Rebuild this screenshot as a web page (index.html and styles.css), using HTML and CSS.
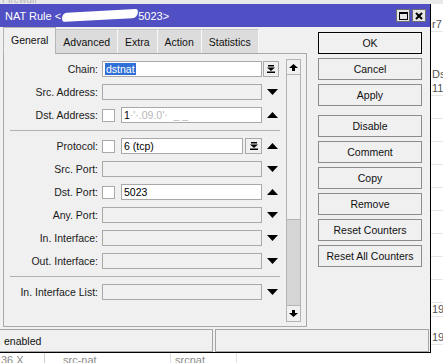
FILE: index.html
```html
<!DOCTYPE html>
<html>
<head>
<meta charset="utf-8">
<link rel="stylesheet" href="styles.css">
</head>
<body>
<div class="screen">
  <div class="topstrip"><span class="ghost">Firewall</span></div>

  <div class="dialog">
    <div class="titlebar">
      <div class="title">NAT Rule &lt;<span class="redact"></span>5023&gt;</div>
      <div class="winbtns">
        <div class="winbtn"><svg width="9" height="8" viewBox="0 0 9 8"><rect x="0.5" y="0.5" width="8" height="7" fill="none" stroke="#000"/><rect x="0" y="0" width="9" height="2" fill="#000"/></svg></div>
        <div class="winbtn"><svg width="8" height="8" viewBox="0 0 8 8"><path d="M1 1 L7 7 M7 1 L1 7" stroke="#000" stroke-width="2"/></svg></div>
      </div>
    </div>

    <div class="body">
      <div class="left">
        <div class="tabs">
          <div class="tab active">General</div>
          <div class="tab">Advanced</div>
          <div class="tab">Extra</div>
          <div class="tab">Action</div>
          <div class="tab">Statistics</div>
        </div>
        <div class="panel">
          <div class="form">
            <div class="row">
              <div class="label">Chain:</div>
              <div class="ctl"><div class="field white"><span class="sel">dstnat</span></div></div>
              <div class="arrow start"><div class="ddbtn"><svg width="8" height="8" viewBox="0 0 8 8"><rect x="1" y="0" width="6" height="1.5"/><polygon points="0,2.5 8,2.5 4,6"/><rect x="0" y="6.5" width="8" height="1.5"/></svg></div></div>
            </div>
            <div class="row">
              <div class="label">Src. Address:</div>
              <div class="ctl"><div class="field"></div></div>
              <div class="arrow"><svg width="11" height="6" viewBox="0 0 11 6"><polygon points="0,0 11,0 5.5,6"/></svg></div>
            </div>
            <div class="row">
              <div class="label">Dst. Address:</div>
              <div class="ctl"><div class="check"></div><div class="field white">1<span class="faint">·'·.09.0'·</span>&nbsp; <span class="faint">_ _</span></div></div>
              <div class="arrow"><svg width="11" height="6" viewBox="0 0 11 6"><polygon points="0,6 11,6 5.5,0"/></svg></div>
            </div>
            <div class="sep"></div>
            <div class="row">
              <div class="label">Protocol:</div>
              <div class="ctl"><div class="check"></div><div class="field white">6 (tcp)</div><div class="ddbtn inl"><svg width="8" height="8" viewBox="0 0 8 8"><rect x="1" y="0" width="6" height="1.5"/><polygon points="0,2.5 8,2.5 4,6"/><rect x="0" y="6.5" width="8" height="1.5"/></svg></div></div>
              <div class="arrow"><svg width="11" height="6" viewBox="0 0 11 6"><polygon points="0,6 11,6 5.5,0"/></svg></div>
            </div>
            <div class="row">
              <div class="label">Src. Port:</div>
              <div class="ctl"><div class="field"></div></div>
              <div class="arrow"><svg width="11" height="6" viewBox="0 0 11 6"><polygon points="0,0 11,0 5.5,6"/></svg></div>
            </div>
            <div class="row">
              <div class="label">Dst. Port:</div>
              <div class="ctl"><div class="check"></div><div class="field white">5023</div></div>
              <div class="arrow"><svg width="11" height="6" viewBox="0 0 11 6"><polygon points="0,6 11,6 5.5,0"/></svg></div>
            </div>
            <div class="row">
              <div class="label">Any. Port:</div>
              <div class="ctl"><div class="field"></div></div>
              <div class="arrow"><svg width="11" height="6" viewBox="0 0 11 6"><polygon points="0,0 11,0 5.5,6"/></svg></div>
            </div>
            <div class="row">
              <div class="label">In. Interface:</div>
              <div class="ctl"><div class="field"></div></div>
              <div class="arrow"><svg width="11" height="6" viewBox="0 0 11 6"><polygon points="0,0 11,0 5.5,6"/></svg></div>
            </div>
            <div class="row">
              <div class="label">Out. Interface:</div>
              <div class="ctl"><div class="field"></div></div>
              <div class="arrow"><svg width="11" height="6" viewBox="0 0 11 6"><polygon points="0,0 11,0 5.5,6"/></svg></div>
            </div>
            <div class="sep"></div>
            <div class="row">
              <div class="label">In. Interface List:</div>
              <div class="ctl"><div class="field"></div></div>
              <div class="arrow"><svg width="11" height="6" viewBox="0 0 11 6"><polygon points="0,0 11,0 5.5,6"/></svg></div>
            </div>
          </div>
          <div class="scrollbar">
            <div class="sb-btn"><svg width="9" height="7" viewBox="0 0 9 7"><polygon points="0,4 4.5,0 9,4"/><rect x="3" y="4" width="3" height="3"/></svg></div>
            <div class="sb-track"></div>
            <div class="sb-thumb"></div>
            <div class="sb-btn bottom"><svg width="9" height="7" viewBox="0 0 9 7"><polygon points="0,3 4.5,7 9,3"/><rect x="3" y="0" width="3" height="3"/></svg></div>
          </div>
        </div>
      </div>

      <div class="buttons">
        <div class="btn default">OK</div>
        <div class="btn">Cancel</div>
        <div class="btn">Apply</div>
        <div class="btn gap">Disable</div>
        <div class="btn">Comment</div>
        <div class="btn">Copy</div>
        <div class="btn">Remove</div>
        <div class="btn">Reset Counters</div>
        <div class="btn">Reset All Counters</div>
      </div>
    </div>

    <div class="status">
      <div class="st st1">enabled</div>
      <div class="st st2"></div>
    </div>
  </div>

  <div class="rightlist">
    <div class="rl h14"></div>
    <div class="rl h14 line">r7</div>
    <div class="rl h36"></div>
    <div class="rl h14">Ds</div>
    <div class="rl h14 line">11</div>
    <div class="rl h23 line"></div>
    <div class="rl h23 line"></div>
    <div class="rl h23 line"></div>
    <div class="rl h23 line"></div>
    <div class="rl h23 line"></div>
    <div class="rl h23 line"></div>
    <div class="rl h23 line"></div>
    <div class="rl h23 line"></div>
    <div class="rl h23 line"></div>
    <div class="rl h14 line">19</div>
    <div class="rl h14"></div>
    <div class="rl h14 line">19</div>
  </div>

  <div class="bottomstrip">
    <div class="bc c1">36 X</div>
    <div class="bc c2">src-nat</div>
    <div class="bc c3">srcnat</div>
    <div class="bc c4"></div>
  </div>
</div>
</body>
</html>
```

FILE: styles.css
```css
* { box-sizing: border-box; }

html, body {
  margin: 0;
  padding: 0;
}

body {
  width: 443px;
  height: 363px;
  overflow: hidden;
  background: #ffffff;
  font-family: "Liberation Sans", Arial, sans-serif;
  font-size: 10.5px;
  color: #000;
}

.screen {
  display: grid;
  grid-template-columns: 431px 12px;
  grid-template-rows: 4px 349px 10px;
  width: 443px;
  height: 363px;
}

/* background window pieces */
.topstrip {
  grid-column: 1 / 3;
  grid-row: 1;
  background: #e9e9e9;
  overflow: hidden;
  display: flex;
  align-items: flex-end;
  padding-left: 2px;
}
.ghost {
  line-height: 12px;
  height: 12px;
  flex: none;
  margin-bottom: -2px;
  color: #b8b8b8;
  font-size: 10px;
}

.rightlist {
  grid-column: 2;
  grid-row: 2;
  overflow: hidden;
  background: #fff;
  display: flex;
  flex-direction: column;
  color: #555;
  font-size: 11px;
  white-space: nowrap;
}
.rl { flex: none; line-height: 13px; padding-left: 1px; overflow: hidden; }
.rl.h14 { height: 14px; }
.rl.h23 { height: 23px; }
.rl.h36 { height: 36px; }
.rl.line { border-bottom: 1px solid #e6e6e6; }

.bottomstrip {
  grid-column: 1 / 3;
  grid-row: 3;
  display: flex;
  overflow: hidden;
  background: #fff;
  color: #8a8a8a;
  font-size: 11px;
}
.bc {
  line-height: 14px;
  height: 10px;
  padding-left: 1px;
  border-right: 1px solid #e0e0e0;
  white-space: nowrap;
}
.bc.c1 { width: 44px; border-right: none; }
.bc.c2 { width: 127px; padding-left: 18px; border-left: 1px solid #d0d0d0; }
.bc.c3 { width: 66px; padding-left: 4px; }
.bc.c4 { flex: 1; border-right: none; }

/* dialog */
.dialog {
  grid-column: 1;
  grid-row: 2;
  background: #f0f0f0;
  border-right: 1px solid #000;
  border-bottom: 1px solid #000;
  display: flex;
  flex-direction: column;
}

.titlebar {
  height: 23px;
  background: #5050c4;
  color: #fff;
  display: flex;
  align-items: center;
  padding-left: 5px;
  padding-right: 4px;
  flex: none;
}
.title {
  flex: 1;
  font-size: 11px;
  white-space: nowrap;
  display: flex;
  align-items: center;
}
.redact {
  display: inline-block;
  width: 76px;
  height: 9px;
  background: #fff;
  border-radius: 5px 2px 6px 3px;
  margin: 0 0 0 1px;
  transform: rotate(-3deg);
}
.winbtns {
  display: flex;
  gap: 2px;
}
.winbtn {
  width: 14px;
  height: 13px;
  background: #e6e6e6;
  border: 1px solid #707070;
  display: flex;
  align-items: center;
  justify-content: center;
}

.body {
  display: flex;
  height: 300px;
  flex: none;
}

.left {
  width: 307px;
  padding-left: 3px;
  display: flex;
  flex-direction: column;
}

.tabs {
  height: 26px;
  display: flex;
  align-items: flex-end;
}
.tab {
  height: 24px;
  padding: 0 7px;
  background: #dcdcdc;
  border-top: 1px solid #c4c4c4;
  border-right: 1px solid #f8f8f8;
  display: flex;
  align-items: center;
  white-space: nowrap;
  color: #111;
}
.tab.active {
  height: 27px;
  margin-bottom: -1px;
  background: #f0f0f0;
  border: 1px solid #b4b4b4;
  border-bottom: none;
  padding: 0 7px 2px;
  position: relative;
  z-index: 1;
}

.panel {
  height: 274px;
  border: 1px solid #a8a8a8;
  display: flex;
}

.form {
  width: 282px;
  padding-top: 7px;
  display: flex;
  flex-direction: column;
  gap: 7px;
}

.row {
  display: flex;
  align-items: center;
  height: 16px;
}
.label {
  width: 94px;
  margin-right: 4px;
  text-align: right;
  white-space: nowrap;
  color: #1a1a1a;
}
.ctl {
  width: 160px;
  height: 16px;
  display: flex;
  align-items: center;
}
.field {
  flex: 1;
  height: 16px;
  border: 1px solid #a9a9a9;
  background: #f0f0f0;
  padding-left: 2px;
  line-height: 14px;
  white-space: nowrap;
  overflow: hidden;
}
.field.white { background: #fff; }
.sel {
  background: #2f6fd6;
  color: #fff;
  padding: 0 1px;
}
.faint { color: #b8b8b8; }
.check {
  width: 13px;
  height: 13px;
  border: 1px solid #a9a9a9;
  background: #fff;
  margin-right: 6px;
  flex: none;
}
.ddbtn {
  width: 16px;
  height: 16px;
  border: 1px solid #a9a9a9;
  background: #f0f0f0;
  display: flex;
  align-items: center;
  justify-content: center;
  flex: none;
}
.ddbtn.inl {
  width: 17px;
  margin-left: 2px;
}
.arrow {
  width: 20px;
  display: flex;
  justify-content: center;
  align-items: center;
}
.arrow.start {
  justify-content: flex-start;
  padding-left: 1px;
}

.sep {
  height: 1px;
  background: #b0b0b0;
  margin: 0 6px;
  flex: none;
}

.scrollbar {
  width: 15px;
  margin: 5px 0 4px;
  border: 1px solid #b4b4b4;
  display: flex;
  flex-direction: column;
  background: #f0f0f0;
}
.sb-btn {
  height: 15px;
  flex: none;
  display: flex;
  align-items: center;
  justify-content: center;
  border-bottom: 1px solid #b4b4b4;
  background: #f0f0f0;
}
.sb-btn.bottom {
  border-bottom: none;
  border-top: 1px solid #b4b4b4;
  height: 16px;
}
.sb-track {
  flex: 1;
}
.sb-thumb {
  height: 86px;
  flex: none;
  background: #d5d5d5;
  border-top: 1px solid #b4b4b4;
}

.buttons {
  margin-left: 11px;
  padding-top: 5px;
  width: 104px;
  display: flex;
  flex-direction: column;
  gap: 4px;
}
.btn {
  height: 22px;
  border: 1px solid #8c8c8c;
  background: #f0f0f0;
  display: flex;
  align-items: center;
  justify-content: center;
  white-space: nowrap;
  color: #111;
}
.btn.default {
  border: 1px solid #000;
  box-shadow: inset 0 0 0 1px #f6f6f6;
}
.btn.gap { margin-top: 5px; }

.status {
  margin-top: 2px;
  height: 23px;
  display: flex;
  flex: none;
}
.st {
  height: 23px;
  border: 1px solid #a4a4a4;
  display: flex;
  align-items: center;
  padding-left: 3px;
  color: #111;
}
.st1 { width: 213px; border-left: none; padding-left: 4px; }
.st2 { flex: 1; margin-left: 2px; margin-right: 1px; }
```
